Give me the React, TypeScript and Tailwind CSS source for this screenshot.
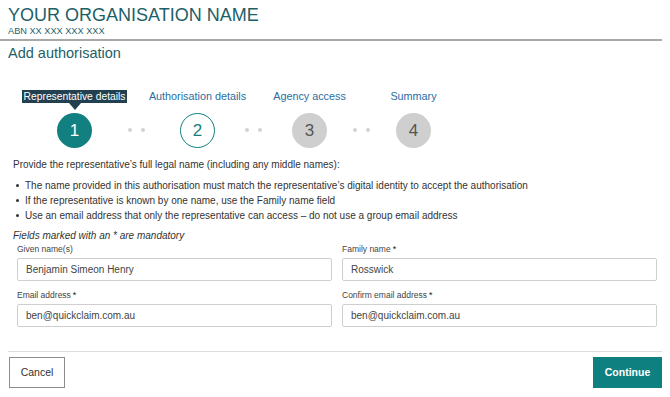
import React from 'react';

const font = { fontFamily: '"Liberation Sans", Arial, Helvetica, sans-serif' };

type StepState = 'active' | 'next' | 'todo';

interface Step {
  label: string;
  state: StepState;
}

const steps: Step[] = [
  { label: 'Representative details', state: 'active' },
  { label: 'Authorisation details', state: 'next' },
  { label: 'Agency access', state: 'todo' },
  { label: 'Summary', state: 'todo' },
];

// gaps between the circles
const connectorWidths = ['w-[88px]', 'w-[77px]', 'w-[69px]'];

function StepCircle({ n, state }: { n: number; state: StepState }) {
  if (state === 'active') {
    return (
      <div className="w-[35px] h-[35px] rounded-full bg-[#128080] text-white flex items-center justify-center text-[17px]">
        {n}
      </div>
    );
  }
  if (state === 'next') {
    return (
      <div className="w-[35px] h-[35px] rounded-full border-[1.5px] border-[#128080] bg-white text-[#128080] flex items-center justify-center text-[17px]">
        {n}
      </div>
    );
  }
  return (
    <div className="w-[35px] h-[35px] rounded-full bg-[#cfcfcf] text-[#555] flex items-center justify-center text-[17px]">
      {n}
    </div>
  );
}

function Stepper() {
  return (
    <div className="flex pl-[57px] mt-[28px]">
      {steps.map((step, i) => (
        <React.Fragment key={step.label}>
          <div className="w-[35px] flex flex-col items-center">
            {step.state === 'active' ? (
              <div className="flex flex-col items-center">
                <div className="bg-[#22404f] text-white text-[10.3px] leading-[13px] px-[2px] h-[13px] whitespace-nowrap">
                  {step.label}
                </div>
                <div className="w-0 h-0 border-l-[6px] border-r-[6px] border-t-[7px] border-l-transparent border-r-transparent border-t-[#22404f]" />
              </div>
            ) : (
              <div className="text-[10.8px] leading-[13px] h-[20px] text-[#2a6ea3] whitespace-nowrap">
                {step.label}
              </div>
            )}
            <div className="mt-[3px]">
              <StepCircle n={i + 1} state={step.state} />
            </div>
          </div>
          {i < steps.length - 1 && (
            <div className={`${connectorWidths[i]} flex items-end justify-center gap-[9px] pb-[16px]`}>
              <span className="w-[4px] h-[4px] rounded-full bg-[#d3d3d3]" />
              <span className="w-[4px] h-[4px] rounded-full bg-[#d3d3d3]" />
            </div>
          )}
        </React.Fragment>
      ))}
    </div>
  );
}

function Field({ label, value, required }: { label: string; value: string; required?: boolean }) {
  return (
    <div className="flex-1">
      <div className="text-[8.5px] text-[#444] leading-[11px] mb-[3px]">
        {label}
        {required && <span className="text-[#222] ml-[2px] text-[9px]">*</span>}
      </div>
      <div className="h-[23px] border border-[#cfcfcf] rounded-[2px] px-[8px] flex items-center text-[10px] text-[#444]">
        {value}
      </div>
    </div>
  );
}

function Bullet({ children }: { children: React.ReactNode }) {
  return (
    <li className="flex items-center">
      <span className="w-[3px] h-[3px] rounded-full bg-[#333] ml-[3px] mr-[6px] shrink-0" />
      {children}
    </li>
  );
}

export default function App() {
  return (
    <div className="w-[670px] h-[397px] bg-white overflow-hidden" style={font}>
      {/* Header */}
      <div className="pt-[5px]">
        <div className="px-[8px] text-[18px] leading-[20px] text-[#1d5f68]">YOUR ORGANISATION NAME</div>
        <div className="px-[8px] text-[9.2px] leading-[12px] text-[#1d5f68]">ABN XX XXX XXX XXX</div>
        <div className="mt-[2px] mr-[8px] h-[2px] bg-[#a8a8a8]" />
        <div className="px-[8px] mt-[3px] text-[14.5px] leading-[18px] text-[#1d5f68]">Add authorisation</div>
      </div>

      <Stepper />

      {/* Instructions */}
      <div className="px-[13px] mt-[9px] text-[10px] text-[#333]">
        <p className="leading-[15px]">Provide the representative’s full legal name (including any middle names):</p>
        <ul className="mt-[6px] leading-[15px]">
          <Bullet>The name provided in this authorisation must match the representative’s digital identity to accept the authorisation</Bullet>
          <Bullet>If the representative is known by one name, use the Family name field</Bullet>
          <Bullet>Use an email address that only the representative can access – do not use a group email address</Bullet>
        </ul>
        <p className="italic mt-[5px] leading-[15px]">Fields marked with an * are mandatory</p>
      </div>

      {/* Form */}
      <div className="px-[17px] pr-[13px] mt-[1px] flex flex-col gap-[9px]">
        <div className="flex gap-[10px]">
          <Field label="Given name(s)" value="Benjamin Simeon Henry" />
          <Field label="Family name" value="Rosswick" required />
        </div>
        <div className="flex gap-[10px]">
          <Field label="Email address" value="ben@quickclaim.com.au" required />
          <Field label="Confirm email address" value="ben@quickclaim.com.au" required />
        </div>
      </div>

      {/* Footer */}
      <div className="mx-[8px] mt-[24px] border-t border-[#dedede] pt-[5px] flex justify-between">
        <button className="ml-[1px] w-[56px] h-[31px] border border-[#8c8c8c] text-[10.5px] text-[#333] bg-white">Cancel</button>
        <button className="w-[69px] h-[31px] bg-[#0f8080] text-white text-[10.5px] font-bold">Continue</button>
      </div>
    </div>
  );
}
